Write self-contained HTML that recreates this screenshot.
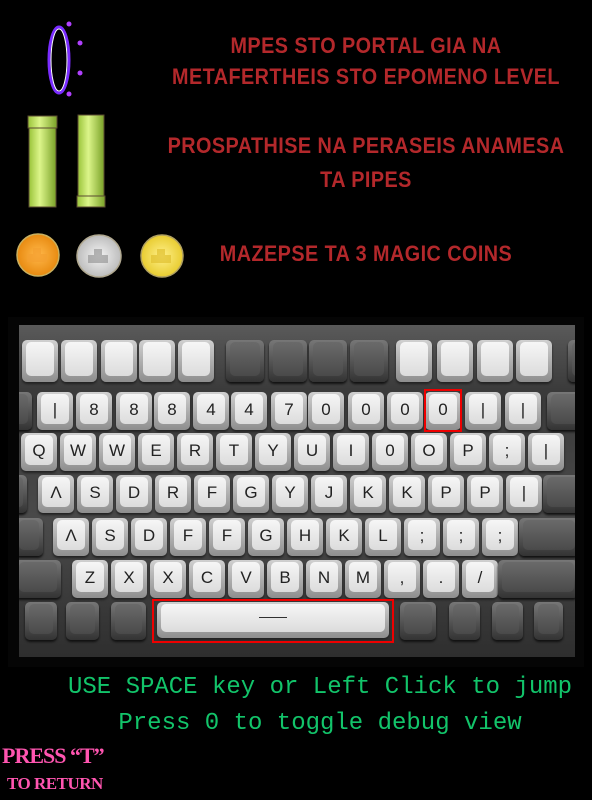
<!DOCTYPE html>
<html><head><meta charset="utf-8"><style>
*{margin:0;padding:0;box-sizing:border-box}
body{width:592px;height:800px;background:#000;position:relative;overflow:hidden;font-family:"Liberation Sans",sans-serif}
.t{position:absolute;color:#b3282b;font-family:"Liberation Sans",sans-serif;font-weight:bold;font-size:22px;letter-spacing:0.5px;white-space:nowrap;transform-origin:center;left:-6px;width:744px;text-align:center;transform:scaleX(0.9)}
.kb{position:absolute;left:8px;top:317px;width:576px;height:350px;background:#050505}
.body{position:absolute;left:19px;top:325px;width:556px;height:332px;background:linear-gradient(#5a5a5a,#3a3a3a 20%,#4a4a4a 60%,#2e2e2e);overflow:hidden}
.k{position:absolute;width:36px;height:38px;border-radius:5px;background:linear-gradient(#d0d0d0,#8e8e8e);box-shadow:0 2px 2px #222}
.k::after{content:"";position:absolute;left:4px;top:2px;right:4px;bottom:6px;border-radius:5px;background:linear-gradient(#f6f6f6,#dcdcdc)}
.k span{position:absolute;z-index:2;left:0;right:0;top:8px;text-align:center;font-size:17px;color:#222}
.d{position:absolute;height:38px;border-radius:5px;background:linear-gradient(#777,#333);box-shadow:0 2px 2px #111}
.d::after{content:"";position:absolute;left:4px;top:2px;right:4px;bottom:6px;border-radius:5px;background:linear-gradient(#6a6a6a,#4a4a4a)}
.red{position:absolute;border:2px solid #e00}
.g{position:absolute;left:0;width:640px;text-align:center;color:#12c46a;font-family:"Liberation Mono",monospace;font-size:24px;white-space:nowrap}
.p{position:absolute;color:#ff55b0;font-family:"Liberation Serif",serif;font-weight:bold;white-space:nowrap}
</style></head><body>
<div class="t" style="top:33px">MPES STO PORTAL GIA NA</div>
<div class="t" style="top:64px">METAFERTHEIS STO EPOMENO LEVEL</div>
<div class="t" style="top:133px">PROSPATHISE NA PERASEIS ANAMESA</div>
<div class="t" style="top:167px">TA PIPES</div>
<div class="t" style="top:241px">MAZEPSE TA 3 MAGIC COINS</div>

<svg style="position:absolute;left:0;top:0" width="200" height="290">
<ellipse cx="59" cy="60" rx="10" ry="33" fill="none" stroke="#7a2cff" stroke-width="3"/>
<ellipse cx="59" cy="60" rx="8" ry="31" fill="none" stroke="#fff" stroke-width="1"/>
<circle cx="69" cy="24" r="2.5" fill="#b040ff"/><circle cx="80" cy="43" r="2.5" fill="#b040ff"/><circle cx="80" cy="73" r="2.5" fill="#b040ff"/><circle cx="69" cy="94" r="2.5" fill="#b040ff"/>
<defs><linearGradient id="pg" x1="0" x2="1"><stop offset="0" stop-color="#9ac43a"/><stop offset=".4" stop-color="#dcf58a"/><stop offset="1" stop-color="#7aa228"/></linearGradient>
<radialGradient id="c1"><stop offset="0" stop-color="#ffb84a"/><stop offset="1" stop-color="#e88a10"/></radialGradient>
<radialGradient id="c2"><stop offset="0" stop-color="#f4f4f4"/><stop offset="1" stop-color="#bdbdbd"/></radialGradient>
<radialGradient id="c3"><stop offset="0" stop-color="#fff08a"/><stop offset="1" stop-color="#e8cc30"/></radialGradient></defs>
<rect x="29" y="128" width="27" height="79" fill="url(#pg)" stroke="#5a4a30"/>
<rect x="28" y="116" width="29" height="12" fill="url(#pg)" stroke="#5a4a30"/>
<rect x="78" y="115" width="26" height="81" fill="url(#pg)" stroke="#5a4a30"/>
<rect x="77" y="196" width="28" height="11" fill="url(#pg)" stroke="#5a4a30"/>
<ellipse cx="38" cy="255" rx="21" ry="21" fill="url(#c1)" stroke="#c8b060" stroke-width="1.5"/>
<ellipse cx="99" cy="256" rx="22" ry="21" fill="url(#c2)" stroke="#b0a890" stroke-width="1.5"/>
<ellipse cx="162" cy="256" rx="21" ry="21" fill="url(#c3)" stroke="#b0a060" stroke-width="1.5"/>
<path d="M27 262h20v-8h-6v-6h-8v6h-6z" fill="#f4a030" opacity=".7"/>
<path d="M88 263h20v-8h-6v-6h-8v6h-6z" fill="#999" opacity=".7"/>
<path d="M151 263h20v-8h-6v-6h-8v6h-6z" fill="#e0c030" opacity=".7"/>
</svg>

<div class="kb"></div>
<div class="body">
<div class="k" style="left:3px;top:15px;height:42px"></div><div class="k" style="left:42px;top:15px;height:42px"></div><div class="k" style="left:82px;top:15px;height:42px"></div><div class="k" style="left:120px;top:15px;height:42px"></div><div class="k" style="left:159px;top:15px;height:42px"></div>
<div class="d" style="left:207px;top:15px;width:38px;height:42px"></div><div class="d" style="left:250px;top:15px;width:38px;height:42px"></div><div class="d" style="left:290px;top:15px;width:38px;height:42px"></div><div class="d" style="left:331px;top:15px;width:38px;height:42px"></div>
<div class="k" style="left:377px;top:15px;height:42px"></div><div class="k" style="left:418px;top:15px;height:42px"></div><div class="k" style="left:458px;top:15px;height:42px"></div><div class="k" style="left:497px;top:15px;height:42px"></div>
<div class="d" style="left:549px;top:15px;width:20px;height:42px"></div>
<div class="d" style="left:-8px;top:67px;width:21px"></div>
<div class="k" style="left:18px;top:67px"><span>|</span></div><div class="k" style="left:57px;top:67px"><span>8</span></div><div class="k" style="left:97px;top:67px"><span>8</span></div><div class="k" style="left:135px;top:67px"><span>8</span></div><div class="k" style="left:174px;top:67px"><span>4</span></div><div class="k" style="left:212px;top:67px"><span>4</span></div><div class="k" style="left:252px;top:67px"><span>7</span></div><div class="k" style="left:289px;top:67px"><span>0</span></div><div class="k" style="left:329px;top:67px"><span>0</span></div><div class="k" style="left:368px;top:67px"><span>0</span></div><div class="k" style="left:406px;top:67px"><span>0</span></div><div class="k" style="left:446px;top:67px"><span>|</span></div><div class="k" style="left:486px;top:67px"><span>|</span></div>
<div class="d" style="left:528px;top:67px;width:40px"></div>
<div class="k" style="left:2px;top:108px"><span>Q</span></div><div class="k" style="left:41px;top:108px"><span>W</span></div><div class="k" style="left:80px;top:108px"><span>W</span></div><div class="k" style="left:119px;top:108px"><span>E</span></div><div class="k" style="left:158px;top:108px"><span>R</span></div><div class="k" style="left:197px;top:108px"><span>T</span></div><div class="k" style="left:236px;top:108px"><span>Y</span></div><div class="k" style="left:275px;top:108px"><span>U</span></div><div class="k" style="left:314px;top:108px"><span>I</span></div><div class="k" style="left:353px;top:108px"><span>0</span></div><div class="k" style="left:392px;top:108px"><span>O</span></div><div class="k" style="left:431px;top:108px"><span>P</span></div><div class="k" style="left:470px;top:108px"><span>;</span></div><div class="k" style="left:509px;top:108px"><span>|</span></div>
<div class="d" style="left:-8px;top:150px;width:16px"></div>
<div class="k" style="left:19px;top:150px"><span>Λ</span></div><div class="k" style="left:58px;top:150px"><span>S</span></div><div class="k" style="left:97px;top:150px"><span>D</span></div><div class="k" style="left:136px;top:150px"><span>R</span></div><div class="k" style="left:175px;top:150px"><span>F</span></div><div class="k" style="left:214px;top:150px"><span>G</span></div><div class="k" style="left:253px;top:150px"><span>Y</span></div><div class="k" style="left:292px;top:150px"><span>J</span></div><div class="k" style="left:331px;top:150px"><span>K</span></div><div class="k" style="left:370px;top:150px"><span>K</span></div><div class="k" style="left:409px;top:150px"><span>P</span></div><div class="k" style="left:448px;top:150px"><span>P</span></div><div class="k" style="left:487px;top:150px"><span>|</span></div>
<div class="d" style="left:524px;top:150px;width:40px"></div>
<div class="d" style="left:-4px;top:193px;width:28px"></div>
<div class="k" style="left:34px;top:193px"><span>Λ</span></div><div class="k" style="left:73px;top:193px"><span>S</span></div><div class="k" style="left:112px;top:193px"><span>D</span></div><div class="k" style="left:151px;top:193px"><span>F</span></div><div class="k" style="left:190px;top:193px"><span>F</span></div><div class="k" style="left:229px;top:193px"><span>G</span></div><div class="k" style="left:268px;top:193px"><span>H</span></div><div class="k" style="left:307px;top:193px"><span>K</span></div><div class="k" style="left:346px;top:193px"><span>L</span></div><div class="k" style="left:385px;top:193px"><span>;</span></div><div class="k" style="left:424px;top:193px"><span>;</span></div><div class="k" style="left:463px;top:193px"><span>;</span></div>
<div class="d" style="left:500px;top:193px;width:60px"></div>
<div class="d" style="left:-4px;top:235px;width:46px"></div>
<div class="k" style="left:53px;top:235px"><span>Z</span></div><div class="k" style="left:92px;top:235px"><span>X</span></div><div class="k" style="left:131px;top:235px"><span>X</span></div><div class="k" style="left:170px;top:235px"><span>C</span></div><div class="k" style="left:209px;top:235px"><span>V</span></div><div class="k" style="left:248px;top:235px"><span>B</span></div><div class="k" style="left:287px;top:235px"><span>N</span></div><div class="k" style="left:326px;top:235px"><span>M</span></div><div class="k" style="left:365px;top:235px"><span>,</span></div><div class="k" style="left:404px;top:235px"><span>.</span></div><div class="k" style="left:443px;top:235px"><span>/</span></div>
<div class="d" style="left:479px;top:235px;width:80px"></div>
<div class="d" style="left:6px;top:277px;width:32px"></div><div class="d" style="left:47px;top:277px;width:33px"></div><div class="d" style="left:92px;top:277px;width:35px"></div>
<div class="k" style="left:138px;top:277px;width:232px;height:36px"><span style="top:6px;font-size:14px">——</span></div>
<div class="d" style="left:381px;top:277px;width:36px"></div><div class="d" style="left:430px;top:277px;width:31px"></div><div class="d" style="left:473px;top:277px;width:31px"></div><div class="d" style="left:515px;top:277px;width:29px"></div>
</div>
<div class="red" style="left:424px;top:389px;width:38px;height:43px"></div>
<div class="red" style="left:152px;top:599px;width:242px;height:44px"></div>

<div class="g" style="left:0;top:674px;width:640px">USE SPACE key or Left Click to jump</div>
<div class="g" style="left:0;top:710px;width:640px">Press 0 to toggle debug view</div>
<div class="p" style="left:2px;top:743px;font-size:22px;letter-spacing:-1px">PRESS “T”</div>
<div class="p" style="left:7px;top:774px;font-size:17px;letter-spacing:-0.5px">TO RETURN</div>
</body></html>
